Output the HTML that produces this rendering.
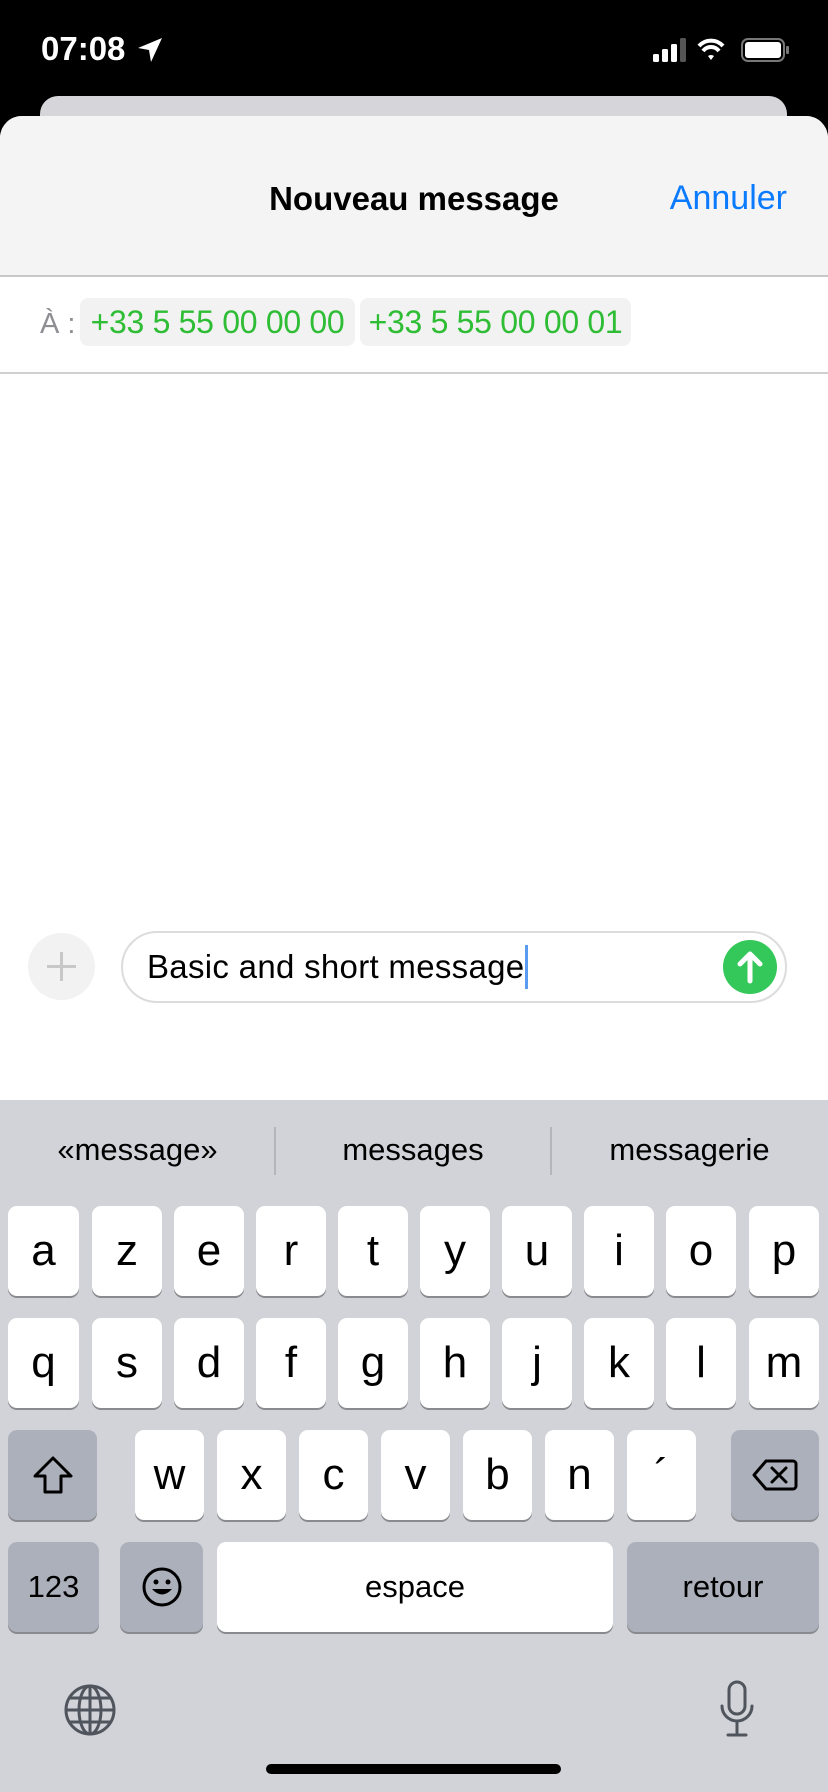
<!DOCTYPE html>
<html><head><meta charset="utf-8"><style>
*{margin:0;padding:0;box-sizing:border-box}
body{width:828px;height:1792px;background:#000;position:relative;overflow:hidden;font-family:"Liberation Sans",sans-serif}
.abs{position:absolute}
.key{position:absolute;background:#fff;border-radius:9px;box-shadow:0 2px 0 #898a8d;display:flex;align-items:center;justify-content:center;font-size:44px;color:#000;height:90px}
.sp{background:#abb0ba}
</style></head><body>
<div class="abs" style="left:41px;top:30px;color:#fff;font-size:33px;font-weight:bold">07:08</div>
<svg class="abs" style="left:136px;top:36px" width="28" height="28" viewBox="0 0 28 28"><path d="M26 2 L2 12 L13 14 L15 26 Z" fill="#fff"/></svg>
<svg class="abs" style="left:652px;top:36px" width="140" height="28" viewBox="0 0 140 28">
<rect x="1" y="18" width="6" height="8" rx="1.5" fill="#fff"/><rect x="10" y="13" width="6" height="13" rx="1.5" fill="#fff"/><rect x="19" y="8" width="6" height="18" rx="1.5" fill="#fff"/><rect x="28" y="2" width="6" height="24" rx="1.5" fill="#555"/>
<path d="M47 10 A16 16 0 0 1 71 10" stroke="#fff" stroke-width="4" fill="none"/><path d="M51 15 A10 10 0 0 1 67 15" stroke="#fff" stroke-width="4" fill="none"/><path d="M56 20 L59 24 L62 20 A5 5 0 0 0 56 20Z" fill="#fff"/>
<rect x="90" y="3" width="42" height="22" rx="6" stroke="#777" stroke-width="2" fill="none"/><rect x="93" y="6" width="36" height="16" rx="3" fill="#fff"/><rect x="134" y="10" width="3" height="8" rx="1" fill="#777"/>
</svg>
<div class="abs" style="left:40px;top:96px;width:747px;height:60px;background:#d6d6da;border-radius:18px 18px 0 0"></div>
<div class="abs" style="left:0;top:116px;width:828px;height:1676px;background:#fff;border-radius:22px 22px 0 0;overflow:hidden">
 <div class="abs" style="left:0;top:0;width:828px;height:161px;background:#f4f4f4;border-bottom:2px solid #c8c8c8"></div>
 <div class="abs" style="left:0;top:64px;width:828px;text-align:center;font-size:33px;font-weight:bold;color:#000">Nouveau message</div>
 <div class="abs" style="right:41px;top:63px;font-size:34px;color:#0a7aff">Annuler</div>
 <div class="abs" style="left:40px;top:192px;font-size:29px;color:#8e8e93">À :</div>
 <div class="abs" style="left:80px;top:182px;width:275px;height:48px;background:#f2f2f2;border-radius:8px;font-size:32px;color:#2ebd35;text-align:center;line-height:48px;letter-spacing:-0.3px">+33 5 55 00 00 00</div>
 <div class="abs" style="left:360px;top:182px;width:271px;height:48px;background:#f2f2f2;border-radius:8px;font-size:32px;color:#2ebd35;text-align:center;line-height:48px;letter-spacing:-0.3px">+33 5 55 00 00 01</div>
 <div class="abs" style="left:0;top:256px;width:828px;height:2px;background:#d0d0d0"></div>
</div>
<div class="abs" style="left:28px;top:933px;width:67px;height:67px;border-radius:50%;background:#f2f2f2"></div>
<div class="abs" style="left:47px;top:965px;width:29px;height:3px;background:#c8c8c8"></div>
<div class="abs" style="left:60px;top:952px;width:3px;height:29px;background:#c8c8c8"></div>
<div class="abs" style="left:121px;top:931px;width:666px;height:72px;border:2px solid #dcdcdc;border-radius:36px"></div>
<div class="abs" style="left:147px;top:948px;font-size:33px;color:#000;letter-spacing:0.3px">Basic and short message</div>
<div class="abs" style="left:525px;top:945px;width:3px;height:44px;background:#5a9cf0"></div>
<svg class="abs" style="left:723px;top:940px" width="54" height="54" viewBox="0 0 54 54"><circle cx="27" cy="27" r="27" fill="#34c759"/><path d="M27 41 V14 M17 24 L27 14 L37 24" stroke="#fff" stroke-width="5" fill="none" stroke-linecap="round" stroke-linejoin="round"/></svg>
<div class="abs" style="left:0;top:1100px;width:828px;height:692px;background:#d1d3d9"></div>
<div class="abs" style="left:0;top:1132px;width:275px;text-align:center;font-size:31px;color:#000">«message»</div>
<div class="abs" style="left:275px;top:1132px;width:276px;text-align:center;font-size:31px;color:#000">messages</div>
<div class="abs" style="left:551px;top:1132px;width:277px;text-align:center;font-size:31px;color:#000">messagerie</div>
<div class="abs" style="left:274px;top:1127px;width:2px;height:48px;background:#b4b6bc"></div>
<div class="abs" style="left:550px;top:1127px;width:2px;height:48px;background:#b4b6bc"></div>

<div class="key" style="left:8px;top:1206px;width:71px">a</div>
<div class="key" style="left:92px;top:1206px;width:70px">z</div>
<div class="key" style="left:174px;top:1206px;width:70px">e</div>
<div class="key" style="left:256px;top:1206px;width:70px">r</div>
<div class="key" style="left:338px;top:1206px;width:70px">t</div>
<div class="key" style="left:420px;top:1206px;width:70px">y</div>
<div class="key" style="left:502px;top:1206px;width:70px">u</div>
<div class="key" style="left:584px;top:1206px;width:70px">i</div>
<div class="key" style="left:666px;top:1206px;width:70px">o</div>
<div class="key" style="left:749px;top:1206px;width:70px">p</div>

<div class="key" style="left:8px;top:1318px;width:71px">q</div>
<div class="key" style="left:92px;top:1318px;width:70px">s</div>
<div class="key" style="left:174px;top:1318px;width:70px">d</div>
<div class="key" style="left:256px;top:1318px;width:70px">f</div>
<div class="key" style="left:338px;top:1318px;width:70px">g</div>
<div class="key" style="left:420px;top:1318px;width:70px">h</div>
<div class="key" style="left:502px;top:1318px;width:70px">j</div>
<div class="key" style="left:584px;top:1318px;width:70px">k</div>
<div class="key" style="left:666px;top:1318px;width:70px">l</div>
<div class="key" style="left:749px;top:1318px;width:70px">m</div>

<div class="key sp" style="left:8px;top:1430px;width:89px"><svg width="44" height="40" viewBox="0 0 44 40"><path d="M22 3 L40 21 H30 V37 H14 V21 H4 Z" stroke="#000" stroke-width="3" fill="none" stroke-linejoin="round"/></svg></div>
<div class="key" style="left:135px;top:1430px;width:69px">w</div>
<div class="key" style="left:217px;top:1430px;width:69px">x</div>
<div class="key" style="left:299px;top:1430px;width:69px">c</div>
<div class="key" style="left:381px;top:1430px;width:69px">v</div>
<div class="key" style="left:463px;top:1430px;width:69px">b</div>
<div class="key" style="left:545px;top:1430px;width:69px">n</div>
<div class="key" style="left:627px;top:1430px;width:69px">´</div>
<div class="key sp" style="left:731px;top:1430px;width:88px"><svg width="46" height="34" viewBox="0 0 46 34"><path d="M14 3 H41 A3 3 0 0 1 44 6 V28 A3 3 0 0 1 41 31 H14 L2 17 Z" stroke="#000" stroke-width="3" fill="none" stroke-linejoin="round"/><path d="M20 10 L34 24 M34 10 L20 24" stroke="#000" stroke-width="3" stroke-linecap="round"/></svg></div>

<div class="key sp" style="left:8px;top:1542px;width:91px;font-size:31px">123</div>
<div class="key sp" style="left:120px;top:1542px;width:83px"><svg width="42" height="42" viewBox="0 0 42 42"><circle cx="21" cy="21" r="18" stroke="#000" stroke-width="3" fill="none"/><circle cx="15" cy="16" r="2.5"/><circle cx="27" cy="16" r="2.5"/><path d="M11 23 Q21 34 31 23 Z" fill="#000"/></svg></div>
<div class="key" style="left:217px;top:1542px;width:396px;font-size:31px">espace</div>
<div class="key sp" style="left:627px;top:1542px;width:192px;font-size:31px">retour</div>

<svg class="abs" style="left:63px;top:1683px" width="54" height="54" viewBox="0 0 54 54" fill="none" stroke="#50545c" stroke-width="3"><circle cx="27" cy="27" r="24"/><ellipse cx="27" cy="27" rx="11" ry="24"/><path d="M27 3 V51 M3 27 H51 M7 15 H47 M7 39 H47"/></svg>
<svg class="abs" style="left:718px;top:1680px" width="38" height="60" viewBox="0 0 38 60" fill="none" stroke="#50545c" stroke-width="3"><rect x="11" y="2" width="16" height="32" rx="8"/><path d="M4 26 A15 15 0 0 0 34 26 M19 41 V54 M10 55 H28" stroke-linecap="round"/></svg>
<div class="abs" style="left:266px;top:1764px;width:295px;height:10px;border-radius:5px;background:#000"></div>
</body></html>
